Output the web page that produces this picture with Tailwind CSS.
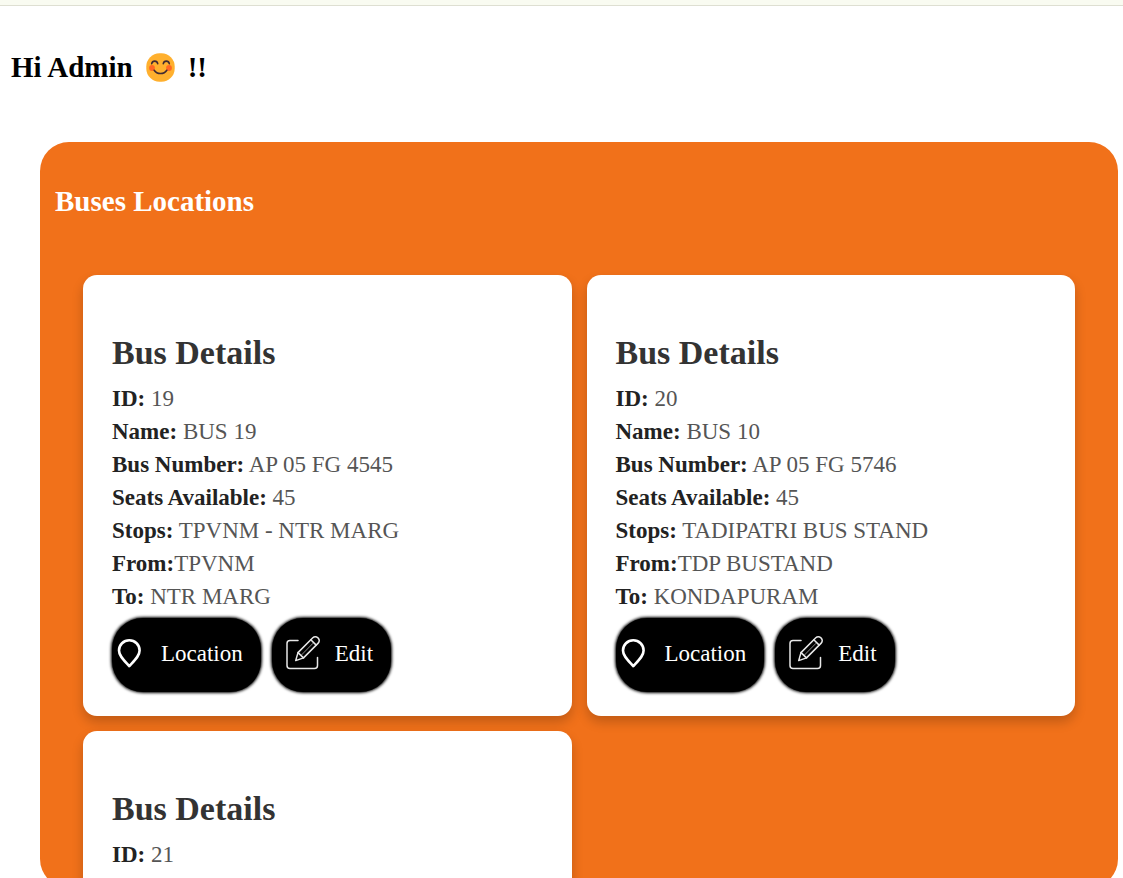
<!DOCTYPE html>
<html lang="en">
<head>
<meta charset="utf-8">
<meta name="viewport" content="width=device-width, initial-scale=1">
<title>Buses Locations</title>
<script src="https://cdn.jsdelivr.net/npm/@tailwindcss/browser@4"></script>
</head>
<body class="h-screen overflow-hidden bg-white font-['Liberation_Serif',serif] text-black">
<svg class="hidden" aria-hidden="true">
  <symbol id="pin" viewBox="0 0 24 32">
    <path d="M12.300 3.300C6.600 3.300 2 7.800 2 13.400c0 5.400 4.800 9.600 10.300 15.600 5.500-6 10.300-10.200 10.300-15.600C22.600 7.800 18 3.300 12.300 3.300Z" fill="none" stroke="currentColor" stroke-width="2.600" stroke-linejoin="round"/>
  </symbol>
  <symbol id="edit" viewBox="0 0 36 36">
    <g fill="none" stroke="#e8e8e8" stroke-width="1.500" stroke-linecap="round" stroke-linejoin="round">
      <path d="M13 5.500H5a3 3 0 0 0-3 3v22a3 3 0 0 0 3 3h24.500a3 3 0 0 0 3-3v-8"/>
      <path d="M10.700 25.600l2.300-8L27.800 2.700a3.500 3.500 0 0 1 5 0l.4.400a3.500 3.500 0 0 1 0 5L18.500 22.900Z"/>
      <path d="M13 17.600l5.500 5.300M25.800 4.700l5.400 5.400"/>
      <path d="M16.500 20 27.800 8.500" stroke-width=".6"/>
    </g>
  </symbol>
</svg>

<header class="h-[6px] border-b border-[#dedfd2] bg-[#f9fbf1]"></header>

<main>
  <h1 class="flex items-center pt-[45px] pl-[11px] text-[29px] leading-[33px] font-bold">
    Hi Admin
    <svg class="mx-[13px] size-[29px]" viewBox="0 0 29 29" role="img" aria-label="Smiling face">
      <rect x=".3" y=".3" width="28.400" height="28.400" rx="13.200" fill="#ffb02e"/>
      <circle cx="6" cy="15" r="2.900" fill="#ff6723"/>
      <circle cx="23" cy="15" r="2.900" fill="#ff6723"/>
      <g fill="none" stroke="#402a32" stroke-width="1.600" stroke-linecap="round">
        <path d="M5.700 10.700c.7-3.400 5.300-3.400 6 0M17.300 10.700c.7-3.400 5.300-3.400 6 0M8.200 17.300c2.700 4.300 9.900 4.300 12.600 0"/>
      </g>
    </svg>
    !!
  </h1>

  <section class="mt-[58px] mr-[5px] ml-[40px] h-[85vh] overflow-hidden rounded-[29px] bg-[#f1711a]">
    <h2 class="pt-[43px] pl-[15px] text-[29px] leading-[33px] font-bold text-white">Buses Locations</h2>

    <div class="mx-[43px] mt-[57px] grid grid-cols-2 gap-[15px]">
      <article class="rounded-[14px] bg-white px-[29px] pt-[58px] pb-[24px] text-[23px] leading-[33px] text-[#555] shadow-[0_6px_12px_rgba(0,0,0,0.2)]">
        <h3 class="mb-[9px] text-[34px] leading-[40px] font-bold text-[#333]">Bus Details</h3>
        <p><b class="text-[#222]">ID:</b> 19</p>
        <p><b class="text-[#222]">Name:</b> BUS 19</p>
        <p><b class="text-[#222]">Bus Number:</b> AP 05 FG 4545</p>
        <p><b class="text-[#222]">Seats Available:</b> 45</p>
        <p><b class="text-[#222]">Stops:</b> TPVNM - NTR MARG</p>
        <p><b class="text-[#222]">From:</b>TPVNM</p>
        <p><b class="text-[#222]">To:</b> NTR MARG</p>
        <div class="mt-[5px] flex gap-[11px] text-white">
          <button class="flex h-[74px] items-center rounded-[31px] bg-black pr-[18px] pb-[4px] pl-[5px] shadow-[0_0_3px_1px_#000]"><svg class="mr-[20px] h-[32px] w-[24px]"><use href="#pin"/></svg>Location</button>
          <button class="flex h-[74px] items-center rounded-[31px] bg-black pr-[18px] pb-[4px] pl-[13px] shadow-[0_0_3px_1px_#000]"><svg class="mr-[14px] size-[36px]"><use href="#edit"/></svg>Edit</button>
        </div>
      </article>

      <article class="rounded-[14px] bg-white px-[29px] pt-[58px] pb-[24px] text-[23px] leading-[33px] text-[#555] shadow-[0_6px_12px_rgba(0,0,0,0.2)]">
        <h3 class="mb-[9px] text-[34px] leading-[40px] font-bold text-[#333]">Bus Details</h3>
        <p><b class="text-[#222]">ID:</b> 20</p>
        <p><b class="text-[#222]">Name:</b> BUS 10</p>
        <p><b class="text-[#222]">Bus Number:</b> AP 05 FG 5746</p>
        <p><b class="text-[#222]">Seats Available:</b> 45</p>
        <p><b class="text-[#222]">Stops:</b> TADIPATRI BUS STAND</p>
        <p><b class="text-[#222]">From:</b>TDP BUSTAND</p>
        <p><b class="text-[#222]">To:</b> KONDAPURAM</p>
        <div class="mt-[5px] flex gap-[11px] text-white">
          <button class="flex h-[74px] items-center rounded-[31px] bg-black pr-[18px] pb-[4px] pl-[5px] shadow-[0_0_3px_1px_#000]"><svg class="mr-[20px] h-[32px] w-[24px]"><use href="#pin"/></svg>Location</button>
          <button class="flex h-[74px] items-center rounded-[31px] bg-black pr-[18px] pb-[4px] pl-[13px] shadow-[0_0_3px_1px_#000]"><svg class="mr-[14px] size-[36px]"><use href="#edit"/></svg>Edit</button>
        </div>
      </article>

      <article class="rounded-[14px] bg-white px-[29px] pt-[58px] pb-[24px] text-[23px] leading-[33px] text-[#555] shadow-[0_6px_12px_rgba(0,0,0,0.2)]">
        <h3 class="mb-[9px] text-[34px] leading-[40px] font-bold text-[#333]">Bus Details</h3>
        <p><b class="text-[#222]">ID:</b> 21</p>
      </article>
    </div>
  </section>
</main>
</body>
</html>
